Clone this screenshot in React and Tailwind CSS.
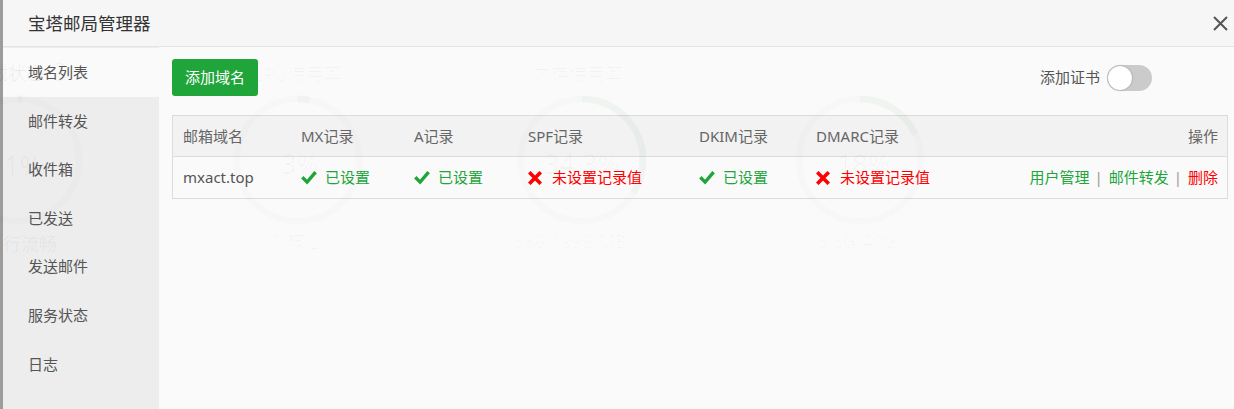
import React from 'react'

const CheckIcon = () => (
  <svg width="16" height="14" viewBox="0 0 16 14" fill="none" stroke="#20a53a" strokeWidth="3.4" strokeLinecap="square">
    <path d="M2.5 7.5l3.6 3.6 7.4-8.6" />
  </svg>
)

const CrossIcon = () => (
  <svg width="14" height="14" viewBox="0 0 14 14" fill="none" stroke="#ff0000" strokeWidth="3.6" strokeLinecap="square">
    <path d="M2.5 2.5l9 9M11.5 2.5l-9 9" />
  </svg>
)

const CloseIcon = () => (
  <svg width="15" height="15" viewBox="0 0 15 15" fill="none" stroke="#555" strokeWidth="2">
    <path d="M1 1l13 13M14 1L1 14" />
  </svg>
)

const Ring = ({ cx, pct }) => (
  <svg className="absolute top-[94px]" style={{ left: cx - 66 }} width="132" height="132" viewBox="0 0 132 132" fill="none">
    <circle cx="66" cy="66" r="61" stroke="rgba(0,0,0,0.012)" strokeWidth="7" />
    <circle
      cx="66" cy="66" r="61" stroke="rgba(32,165,58,0.03)" strokeWidth="7"
      strokeDasharray={`${(383 * pct) / 100} 383`} transform="rotate(-90 66 66)"
    />
  </svg>
)

// faint dashboard that shows through the modal
const Backdrop = () => (
  <div className="absolute inset-0 pointer-events-none text-[rgba(0,0,0,0.028)]">
    <Ring cx={18} pct={1} />
    <Ring cx={298} pct={3} />
    <Ring cx={582} pct={34} />
    <Ring cx={860} pct={18} />
    <span className="absolute left-[-10px] top-[60px] text-[18px] text-[rgba(0,0,0,0.06)]">载状态</span>
    <span className="absolute left-[50px] top-[63px] w-[18px] h-[18px] rounded-full border border-[rgba(0,0,0,0.04)]" />
    <span className="absolute left-[4px] top-[146px] text-[27px] text-[rgba(0,0,0,0.035)]">1%</span>
    <span className="absolute left-[-15px] top-[231px] text-[18px] text-[rgba(0,0,0,0.05)]">
      <span className="text-[rgba(230,140,0,0.2)]">运</span>行流畅
    </span>
    <span className="absolute left-[252px] top-[61px] text-[18px]">CPU使用率</span>
    <span className="absolute left-[533px] top-[61px] text-[18px]">内存使用率</span>
    <span className="absolute left-[281px] top-[144px] text-[27px]">3%</span>
    <span className="absolute left-[544px] top-[144px] text-[27px]">34.3%</span>
    <span className="absolute left-[837px] top-[144px] text-[27px]">18%</span>
    <span className="absolute left-[272px] top-[228px] text-[18px]">1 核心</span>
    <span className="absolute left-[514px] top-[228px] text-[18px]">686/1999(MB)</span>
    <span className="absolute left-[817px] top-[228px] text-[18px]">6.6G/40G</span>
  </div>
)

const menu = ['域名列表', '邮件转发', '收件箱', '已发送', '发送邮件', '服务状态', '日志']

const Ok = () => (
  <span className="flex items-center gap-2 text-[#20a53a]">
    <CheckIcon /> 已设置
  </span>
)

const Missing = () => (
  <span className="flex items-center gap-[10px] text-[#ff0000]">
    <CrossIcon /> 未设置记录值
  </span>
)

export default function App() {
  return (
    <div className="relative w-[1234px] h-[409px] overflow-hidden bg-[#9c9c9c] pl-[3px] font-['Noto_Sans','Noto_Sans_CJK_SC',sans-serif] text-[15px]">
      <div className="flex flex-col h-full">
        {/* header */}
        <div className="flex items-center justify-between h-[47px] shrink-0 pl-[25px] pr-[6px] bg-[#f6f6f6] border-b border-[#e4e4e4]">
          <span className="text-[17.5px] text-[#333]">宝塔邮局管理器</span>
          <CloseIcon />
        </div>

        <div className="flex flex-1">
          {/* sidebar */}
          <div className="w-[156px] shrink-0 bg-[#ededed] pt-px">
            {menu.map((m, i) => (
              <div
                key={m}
                className={`h-[48.6px] flex items-center pl-[25px] text-[#555] ${i === 0 ? 'bg-[#fafafa]' : ''}`}
              >
                {m}
              </div>
            ))}
          </div>

          {/* content */}
          <div className="flex-1 bg-[#fafafa] pl-[13px] pr-[6px] pt-[12px]">
            <div className="flex items-center justify-between">
              <button className="h-[37px] px-[13px] rounded-[3px] bg-[#20a53a] text-white">添加域名</button>
              <div className="flex items-center gap-[7px] mr-[76px] text-[#555]">
                添加证书
                <div className="w-[45px] h-[26px] rounded-full bg-[#cbcbcb] p-px">
                  <div className="w-[24px] h-[24px] rounded-full bg-white shadow-[0_0_2px_rgba(0,0,0,0.35)]" />
                </div>
              </div>
            </div>

            <div className="mt-[19px] border border-[#dcdcdc]">
              <div className="grid grid-cols-[117px_113px_114px_171px_117px_1fr_auto] h-[41px] items-center bg-[#f2f2f2] border-b border-[#dcdcdc] text-[#666]">
                <span className="pl-[10px]">邮箱域名</span>
                <span className="pl-[11px]">MX记录</span>
                <span className="pl-[11px]">A记录</span>
                <span className="pl-[11px]">SPF记录</span>
                <span className="pl-[11px]">DKIM记录</span>
                <span className="pl-[11px]">DMARC记录</span>
                <span className="pr-[9px] text-right">操作</span>
              </div>
              <div className="grid grid-cols-[117px_113px_114px_171px_117px_1fr_auto] h-[41px] items-center text-[#555]">
                <span className="pl-[10px]">mxact.top</span>
                <span className="pl-[11px]"><Ok /></span>
                <span className="pl-[11px]"><Ok /></span>
                <span className="pl-[11px]"><Missing /></span>
                <span className="pl-[11px]"><Ok /></span>
                <span className="pl-[11px]"><Missing /></span>
                <span className="pr-[9px] flex items-center">
                  <span className="text-[#20a53a]">用户管理</span>
                  <span className="ml-[5px] mr-[6px] text-[#999]">|</span>
                  <span className="text-[#20a53a]">邮件转发</span>
                  <span className="ml-[5px] mr-[6px] text-[#999]">|</span>
                  <span className="text-[#ff0000]">删除</span>
                </span>
              </div>
            </div>
          </div>
        </div>
      </div>
      <Backdrop />
    </div>
  )
}
